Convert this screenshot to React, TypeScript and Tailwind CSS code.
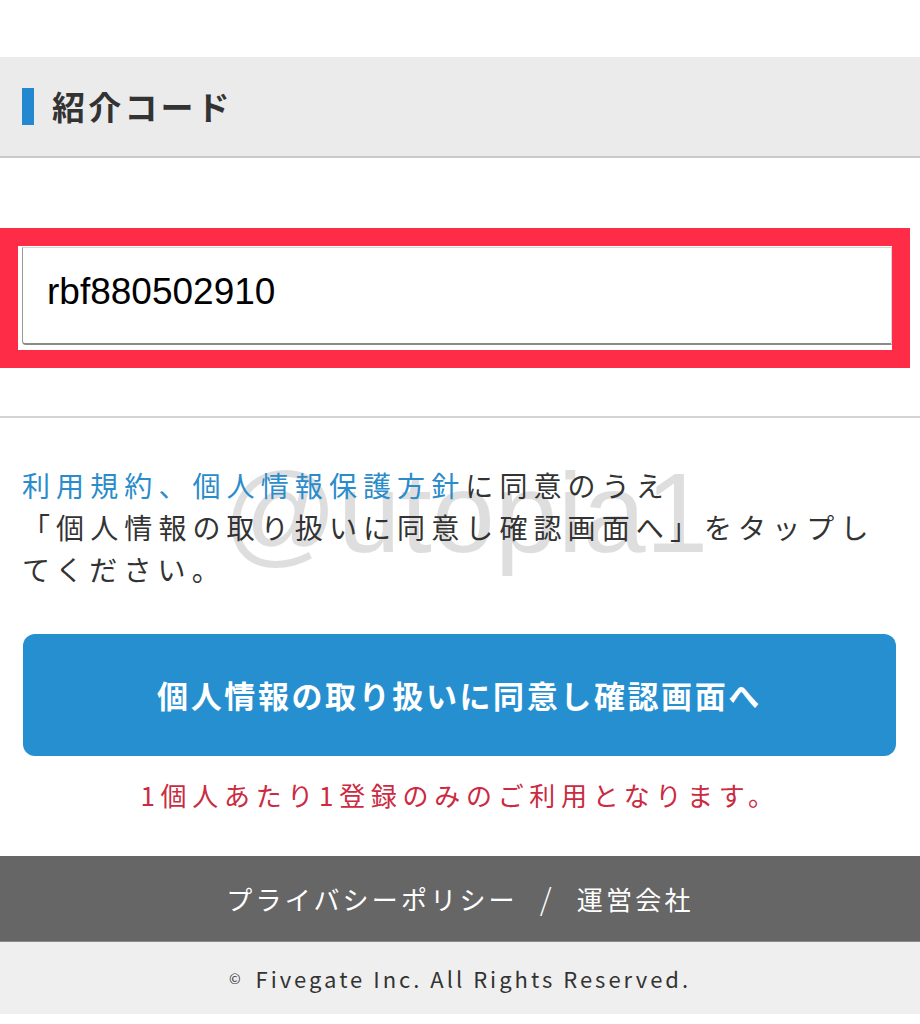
import { useState } from 'react';

const jp = { fontFamily: '"Noto Sans CJK JP", "Noto Sans", sans-serif' };

export default function App() {
  const [code, setCode] = useState('rbf880502910');

  return (
    <div className="relative w-[920px] min-h-[1024px] bg-white text-[#333]" style={jp}>
      {/* Watermark, sits behind the text */}
      <div
        className="absolute left-[223px] top-[457px] z-0 pointer-events-none select-none text-[113px] leading-none text-black/[0.13]"
        style={{ fontFamily: '"Liberation Sans", Arial, sans-serif' }}
      >
        @utopia1
      </div>

      <div className="relative z-10">
        <div className="h-[57px] bg-white" />

        {/* Section header */}
        <div className="flex items-center h-[101px] bg-[#ebebeb] border-b-2 border-[#cacace] px-[22px]">
          <span className="w-[12px] h-[37px] bg-[#2388d0]" />
          <h2 className="ml-[18px] text-[33px] font-bold tracking-[3.2px] leading-none text-[#333]">紹介コード</h2>
        </div>

        {/* Code input */}
        <div className="pt-[70px] pb-[48px] bg-white border-b-2 border-[#d4d4d4]">
          <div className="mr-[10px] border-[18px] border-[#fe2c46] pl-[4px] pt-[1px] pb-[5px]">
            <input
              value={code}
              onChange={(e) => setCode(e.target.value)}
              className="block w-full h-[98px] px-[24px] pb-[8px] bg-white border border-[#d6d6d6] border-b-2 border-b-[#8a8a8a] border-l-[#9a9a9a] rounded-bl-[4px] text-[37px] text-black outline-none"
              style={{ fontFamily: '"Liberation Sans", Arial, sans-serif' }}
            />
          </div>
        </div>

        {/* Agreement text */}
        <p className="px-[22px] pt-[46px] text-[28px] leading-[42px] tracking-[6.1px] text-[#333]">
          <span className="text-[#2a8ccb]">利用規約、個人情報保護方針</span>に同意のうえ
          <br />
          「個人情報の取り扱いに同意し確認画面へ」をタップし
          <br />
          てください。
        </p>

        {/* Submit */}
        <div className="pl-[23px] pr-[24px] mt-[44px]">
          <button className="w-full h-[122px] rounded-[12px] bg-[#268fd0] text-white text-[31px] font-bold tracking-[2.6px]">
            個人情報の取り扱いに同意し確認画面へ
          </button>
        </div>

        <p className="mt-[19px] text-center text-[26px] leading-[40px] tracking-[5.7px] text-[#cc2a41]">
          1個人あたり1登録のみのご利用となります。
        </p>

        {/* Footer */}
        <footer className="mt-[41px]">
          <div className="flex items-center justify-center h-[86px] bg-[#666] border-b border-[#8a8a8a] text-white text-[26px] tracking-[3.2px]">
            <a>プライバシーポリシー</a>
            <span className="mx-[22px] text-[30px] font-light">/</span>
            <a>運営会社</a>
          </div>
          <div className="flex items-center justify-center h-[72px] bg-[#efefef] text-[#333] text-[22px] tracking-[3px]">
            <span className="text-[14px] mr-[12px]">©</span>
            Fivegate Inc. All Rights Reserved.
          </div>
        </footer>
      </div>
    </div>
  );
}
